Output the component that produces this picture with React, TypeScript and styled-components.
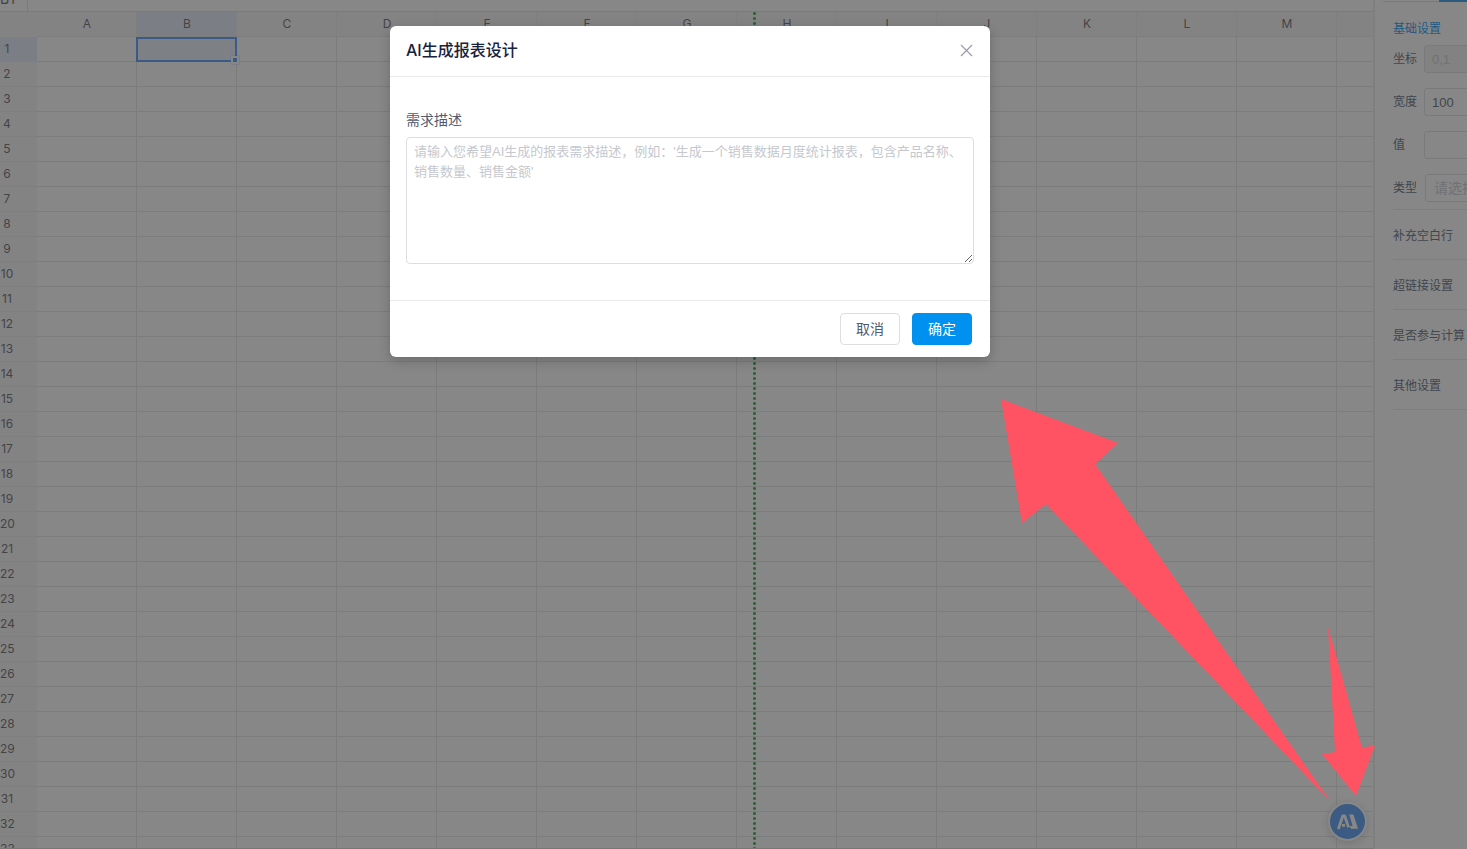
import React from 'react';
import styled, { createGlobalStyle } from 'styled-components';

const ui = '"Inter", "Noto Sans CJK SC", sans-serif';
const text = '"Liberation Sans", "Noto Sans CJK SC", sans-serif';

const GlobalStyle = createGlobalStyle`
  *, *::before, *::after { box-sizing: border-box; }
  body { margin: 0; background: #fff; font-family: ${text}; }
`;

const Page = styled.div`
  position: relative;
  display: flex;
  height: 100vh;
  overflow: hidden;
`;

const Workspace = styled.main`
  flex: 1;
  min-width: 0;
  display: flex;
  flex-direction: column;
  border-right: 2px solid #e8eaec;
`;

const FormulaBar = styled.div`
  flex: none;
  display: flex;
  height: 12px;
  overflow: hidden;
  border-bottom: 1px solid #e0e2e5;
`;

const CellName = styled.div`
  display: flex;
  align-items: flex-end;
  width: 28px;
  padding-bottom: 4px;
  border-right: 1px solid #e0e2e5;
  font: 14px/16px ${ui};
  color: #585757;
`;

const SheetArea = styled.div`
  position: relative;
  flex: 1;
  overflow: hidden;
  border-bottom: 1px solid #d8d8d8;
`;

const Sheet = styled.table`
  table-layout: fixed;
  width: 1437px;
  border-collapse: separate;
  border-spacing: 0;
  font: 12px/16px ${ui};
  color: #585757;
`;

const ColumnHead = styled.th<{ $active?: boolean }>`
  width: 100px;
  height: 25px;
  padding: 0 0 0 1px;
  font-weight: 400;
  border-right: 1px solid #ebebed;
  border-bottom: 1px solid #e4e5e7;
  background: ${p => (p.$active ? '#e0ebf9' : '#f4f5f8')};
`;

const Corner = styled.td`
  width: 37px;
  background: #f4f5f8;
`;

const RowHead = styled.th<{ $active?: boolean }>`
  height: 25px;
  padding: 0 23px 0 0;
  font-weight: 400;
  text-align: center;
  white-space: nowrap;
  border-bottom: 1px solid #ebebed;
  background: ${p => (p.$active ? '#e0ebf9' : '#f4f5f8')};
`;

const Cell = styled.td`
  padding: 0;
  border-right: 1px solid #e4e4e4;
  border-bottom: 1px solid #e4e4e4;
`;

const SelectedCell = styled(Cell)`
  position: relative;
`;

const Selection = styled.div`
  position: absolute;
  inset: 0 -1px -1px -1px;
  border: 2px solid #4490ff;
  background: rgba(68, 130, 225, 0.14);

  &::after {
    content: '';
    position: absolute;
    right: -4px;
    bottom: -4px;
    width: 8px;
    height: 8px;
    border: 2px solid #fff;
    background: #4490ff;
    box-shadow: 0 0 1px #4490ff;
  }
`;

const PrintEdge = styled.div`
  position: absolute;
  top: 0;
  bottom: 0;
  left: 753px;
  width: 3px;
  background: radial-gradient(circle, #18a838 1px, transparent 2px) 0 -1px / 3px 5px;
`;

const Sidebar = styled.aside`
  flex: none;
  width: 92px;
  overflow: hidden;
  font-size: 12px;
  line-height: 20px;
  color: #515a6e;
`;

const TabLine = styled.div`
  height: 2px;
  margin-left: 8px;
  padding-left: 56px;
  border-bottom: 1px solid #dcdee2;

  &::before {
    content: '';
    display: block;
    height: 2px;
    background: #1890e8;
  }
`;

const Settings = styled.div`
  display: flex;
  flex-direction: column;
  width: 240px;
  padding: 17px 0 0 18px;
`;

const SectionTitle = styled.h2`
  margin: 0 0 6px;
  font-size: 12px;
  font-weight: 400;
  line-height: 20px;
  color: #008ced;
`;

const Field = styled.label`
  display: flex;
  height: 43px;
`;

const FieldName = styled.span`
  width: 31px;
  padding-top: 4px;
`;

const fieldBox = `
  width: 160px;
  height: 28px;
  padding: 0 7px;
  border: 1px solid #dcdee2;
  border-radius: 3px;
  color: #515a6e;
`;

const FieldInput = styled.input`
  ${fieldBox}
  font: 13px ${text};
  background: #fff;

  &:disabled { background: #f3f3f3; color: #c5c8ce; }
`;

const FieldSelect = styled.select`
  ${fieldBox}
  appearance: none;
  margin-left: 1px;
  padding-left: 8px;
  font: 14px ${text};
  background: #fff;
  color: #c5c8ce;
`;

const Group = styled.button`
  height: 50px;
  padding: 3px 0 0;
  border: 0;
  border-bottom: 1px solid #e4e6ea;
  background: none;
  text-align: left;
  font: 12px/20px ${text};
  color: #515a6e;
`;

const Groups = styled.div`
  display: flex;
  flex-direction: column;
  margin-top: -8px;
  border-top: 1px solid #e4e6ea;
`;

const Assistant = styled.button`
  position: absolute;
  right: 100px;
  bottom: 8px;
  width: 39px;
  height: 39px;
  padding: 0;
  border: 2px solid #fff;
  border-radius: 50%;
  background: #4592f5;
  box-shadow: 0 2px 8px rgba(0, 0, 0, 0.2);

  svg { display: block; }
`;

const Mask = styled.div`
  position: absolute;
  inset: 0;
  display: flex;
  align-items: flex-start;
  justify-content: center;
  padding: 26px 87px 0 0;
  background: rgba(55, 55, 55, 0.6);
`;

const Dialog = styled.section`
  width: 600px;
  border-radius: 6px;
  background: #fff;
  box-shadow: 0 4px 12px rgba(0, 0, 0, 0.2);
`;

const DialogHeader = styled.header`
  display: flex;
  align-items: center;
  justify-content: space-between;
  height: 51px;
  padding: 0 15px 2px 16px;
  border-bottom: 1px solid #e8eaec;
`;

const DialogTitle = styled.h1`
  margin: 0;
  font-size: 16px;
  font-weight: 500;
  line-height: 20px;
  color: #17233d;
  font-family: ${ui};
`;

const CloseButton = styled.button`
  width: 15px;
  height: 15px;
  padding: 0;
  border: 0;
  background: none;
  color: #999ca6;

  svg { display: block; }
`;

const DialogBody = styled.div`
  padding: 33px 16px 36px;
`;

const PromptLabel = styled.label`
  display: block;
  margin-bottom: 7px;
  font-size: 14px;
  line-height: 20px;
  color: #515a6e;
`;

const Prompt = styled.textarea`
  display: block;
  width: 100%;
  height: 127px;
  padding: 4px 7px;
  border: 1px solid #dcdee2;
  border-radius: 4px;
  resize: vertical;
  font: 13px/20px ${text};
  color: #515a6e;

  &::placeholder { color: #c5c8ce; }
`;

const DialogFooter = styled.footer`
  display: flex;
  justify-content: flex-end;
  gap: 12px;
  padding: 12px 18px;
  border-top: 1px solid #e8eaec;
`;

const ActionButton = styled.button<{ $primary?: boolean }>`
  width: 60px;
  height: 32px;
  padding: 0;
  border: 1px solid ${p => (p.$primary ? '#0090f0' : '#dcdee2')};
  border-radius: 4px;
  background: ${p => (p.$primary ? '#0090f0' : '#fff')};
  color: ${p => (p.$primary ? '#fff' : '#515a6e')};
  font: 14px/20px ${text};
`;

const Arrows = styled.svg`
  position: absolute;
  right: 87px;
  bottom: 44px;
  pointer-events: none;
`;

const columns = 'ABCDEFGHIJKLMN'.split('');
const rows = Array.from({ length: 33 }, (_, i) => i + 1);
const groups = ['补充空白行', '超链接设置', '是否参与计算', '其他设置'];

export default function App() {
  return (
    <Page>
      <GlobalStyle />
      <Workspace>
        <FormulaBar><CellName>B1</CellName></FormulaBar>
        <SheetArea>
          <Sheet>
            <thead>
              <tr>
                <Corner />
                {columns.map(c => <ColumnHead key={c} scope="col" $active={c === 'B'}>{c}</ColumnHead>)}
              </tr>
            </thead>
            <tbody>
              {rows.map(r => (
                <tr key={r}>
                  <RowHead scope="row" $active={r === 1}>{r}</RowHead>
                  {columns.map(c => r === 1 && c === 'B'
                    ? <SelectedCell key={c}><Selection /></SelectedCell>
                    : <Cell key={c} />)}
                </tr>
              ))}
            </tbody>
          </Sheet>
          <PrintEdge />
        </SheetArea>
      </Workspace>
      <Sidebar>
        <TabLine />
        <Settings>
          <SectionTitle>基础设置</SectionTitle>
          <Field><FieldName>坐标</FieldName><FieldInput disabled defaultValue="0,1" /></Field>
          <Field><FieldName>宽度</FieldName><FieldInput defaultValue="100" /></Field>
          <Field><FieldName>值</FieldName><FieldInput /></Field>
          <Field>
            <FieldName>类型</FieldName>
            <FieldSelect defaultValue=""><option value="">请选择</option></FieldSelect>
          </Field>
          <Groups>{groups.map(g => <Group key={g} type="button">{g}</Group>)}</Groups>
        </Settings>
      </Sidebar>
      <Assistant type="button" aria-label="AI">
        <svg width="35" height="35" viewBox="0 0 35 35" fill="none" stroke="#fff" strokeWidth="2.8" strokeLinejoin="round">
          <path d="M8.4 25 L12.8 11.8 H14.6 L18.6 23.4 M12 21.4 H15" />
          <path d="M19.2 10.4 H23.4 L28 24.8 H20.8 L19.8 22 H22.6 Z" fill="#fff" stroke="none" />
        </svg>
      </Assistant>
      <Mask>
        <Dialog role="dialog" aria-labelledby="dialog-title">
          <DialogHeader>
            <DialogTitle id="dialog-title">AI生成报表设计</DialogTitle>
            <CloseButton type="button" aria-label="关闭">
              <svg width="15" height="15" viewBox="0 0 15 15" stroke="currentColor" strokeWidth="1.2">
                <path d="M1 2 L12 13 M12 2 L1 13" />
              </svg>
            </CloseButton>
          </DialogHeader>
          <DialogBody>
            <PromptLabel htmlFor="prompt">需求描述</PromptLabel>
            <Prompt
              id="prompt"
              placeholder="请输入您希望AI生成的报表需求描述，例如：'生成一个销售数据月度统计报表，包含产品名称、销售数量、销售金额'"
            />
          </DialogBody>
          <DialogFooter>
            <ActionButton type="button">取消</ActionButton>
            <ActionButton type="button" $primary>确定</ActionButton>
          </DialogFooter>
        </Dialog>
      </Mask>
      <Arrows width="380" height="408" viewBox="1000 397 380 408" fill="#ff5262">
        <path d="M1001 399 L1118 443 L1095 464 L1330 801 L1046 504 L1022 523 Z" />
        <path d="M1328 627 L1362 748 L1375 745 L1356 796 L1322 754 L1335 752 Z" />
      </Arrows>
    </Page>
  );
}
